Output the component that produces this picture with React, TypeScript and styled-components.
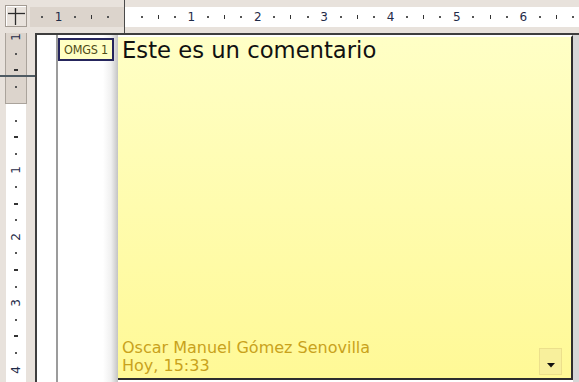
import React from 'react';
import styled, { createGlobalStyle } from 'styled-components';

const Q = 16.6;

const GlobalStyle = createGlobalStyle`
  html, body { margin: 0; padding: 0; background: #e8e2dc; overflow: hidden; }
  body { font-family: "DejaVu Sans", "Noto Sans", sans-serif; }
`;

const Frame = styled.div`
  width: 579px;
  height: 382px;
  display: flex;
  flex-direction: column;
  background: #e8e2dc;
  overflow: hidden;
`;

const TopBar = styled.div`
  height: 33px;
  display: flex;
  flex-shrink: 0;
`;

const Corner = styled.div`
  width: 30px;
  padding: 5px 0 0 5px;
  box-sizing: border-box;
  flex-shrink: 0;
`;

const CornerBox = styled.div`
  width: 22px;
  height: 22px;
  box-sizing: border-box;
  border: 1px solid #a39b93;
  box-shadow: inset 1px 1px 0 #fff;
  display: flex;
  align-items: center;
  justify-content: center;
`;

const HSegment = styled.div<{ $margin?: boolean }>`
  height: 20px;
  margin-top: 7px;
  display: flex;
  align-items: center;
  overflow: hidden;
  background: ${(p) => (p.$margin ? '#dcd4cc' : '#ffffff')};
  justify-content: ${(p) => (p.$margin ? 'flex-end' : 'flex-start')};
  width: ${(p) => (p.$margin ? '94px' : 'auto')};
  flex: ${(p) => (p.$margin ? '0 0 94px' : '1')};
`;

const HDivider = styled.div`
  width: 1px;
  flex-shrink: 0;
  background: #4a4a4a;
`;

const Spacer = styled.div<{ $w?: number; $h?: number }>`
  flex: 0 0 auto;
  width: ${(p) => (p.$w !== undefined ? `${p.$w}px` : 'auto')};
  height: ${(p) => (p.$h !== undefined ? `${p.$h}px` : 'auto')};
`;

const HCell = styled.div`
  flex: 0 0 ${Q}px;
  width: ${Q}px;
  height: 20px;
  display: flex;
  align-items: center;
  justify-content: center;
`;

const VCell = styled.div`
  flex: 0 0 ${Q}px;
  height: ${Q}px;
  width: 20px;
  display: flex;
  align-items: center;
  justify-content: center;
`;

const Dot = styled.div`
  width: 2px;
  height: 2px;
  background: #555;
`;

const HTick = styled.div`
  width: 1px;
  height: 4px;
  background: #333;
`;

const VTick = styled.div`
  width: 4px;
  height: 2px;
  background: #333;
`;

const Digit = styled.span<{ $vertical?: boolean }>`
  font-family: "DejaVu Sans", sans-serif;
  font-size: 12px;
  line-height: 12px;
  color: #1f2b48;
  display: inline-block;
  transform: ${(p) => (p.$vertical ? 'rotate(-90deg)' : 'none')};
`;

const Body = styled.div`
  flex: 1;
  display: flex;
  min-height: 0;
`;

const LeftRuler = styled.div`
  width: 35px;
  flex-shrink: 0;
  position: relative;
  display: flex;
  padding-left: 5px;
  box-sizing: border-box;
`;

const VStrip = styled.div`
  width: 22px;
  display: flex;
  flex-direction: column;
`;

const VMarginBox = styled.div`
  height: 71px;
  flex-shrink: 0;
  box-sizing: border-box;
  border: 1px solid #aaa39b;
  border-top: none;
  background: #dcd4cc;
  display: flex;
  flex-direction: column;
  justify-content: flex-end;
  align-items: center;
  overflow: hidden;
`;

const VWhite = styled.div`
  flex: 1;
  background: #fff;
  margin: 0 1px;
  display: flex;
  flex-direction: column;
  align-items: center;
  overflow: hidden;
`;

const IndentLine = styled.div`
  position: absolute;
  left: 0;
  top: 42px;
  width: 35px;
  height: 2px;
  background: #4f5b63;
`;

const Doc = styled.div`
  flex: 1;
  display: flex;
  min-width: 0;
  border-top: 2px solid #3e3e3e;
  border-left: 2px solid #3e3e3e;
  background: #fff;
`;

const PageStrip = styled.div`
  width: 81px;
  flex-shrink: 0;
  display: flex;
  background: linear-gradient(to right, #ffffff 0, #ffffff 66px, #f0f0f0 74px, #c4c4c4 81px);
`;

const MarginLine = styled.div`
  width: 2px;
  flex-shrink: 0;
  background: #9c9c9c;
`;

const AnchorCol = styled.div`
  width: 56px;
  flex-shrink: 0;
  padding-top: 3px;
`;

const Anchor = styled.div`
  height: 23px;
  box-sizing: border-box;
  border: 2px solid #25255c;
  background: #ffffc4;
  display: flex;
  align-items: center;
  justify-content: center;
  font-family: "DejaVu Sans Condensed", "DejaVu Sans", sans-serif;
  font-size: 12.5px;
  letter-spacing: -0.2px;
  color: #4f4b16;
`;

const Panel = styled.div`
  flex: 1;
  display: flex;
  flex-direction: column;
  justify-content: space-between;
  margin-bottom: 2px;
  border-top: 2px solid #ffffff;
  border-right: 2px solid #2e2e2e;
  border-bottom: 2px solid #2e2e2e;
  background: linear-gradient(to bottom, #ffffc6, #fff996);
`;

const CommentText = styled.div`
  padding: 0 0 0 4px;
  font-family: "DejaVu Sans", sans-serif;
  font-size: 22.7px;
  line-height: 27px;
  color: #111;
`;

const Footer = styled.div`
  display: flex;
  align-items: flex-end;
  justify-content: space-between;
  padding: 0 9px 3px 4px;
`;

const Author = styled.div`
  font-family: "DejaVu Sans", sans-serif;
  font-size: 16px;
  line-height: 18px;
  color: #c9a21c;
`;

const DropButton = styled.div`
  width: 23px;
  height: 27px;
  box-sizing: border-box;
  border: 1px solid #ece08c;
  background: #f8f09c;
  display: flex;
  align-items: flex-end;
  justify-content: center;
  padding-bottom: 6px;
`;

const RightGutter = styled.div`
  width: 6px;
  flex-shrink: 0;
  background: #d6d6d6;
`;

type Mark = 'd' | 't' | string;

const sequence = (count: number, startUnit: number): Mark[] => {
  const out: Mark[] = [];
  let unit = startUnit;
  while (out.length < count) {
    out.push('d', 't', 'd', String(unit));
    unit += 1;
  }
  return out.slice(0, count);
};

const HMark: React.FC<{ m: Mark }> = ({ m }) => (
  <HCell>{m === 'd' ? <Dot /> : m === 't' ? <HTick /> : <Digit>{m}</Digit>}</HCell>
);

const VMark: React.FC<{ m: Mark }> = ({ m }) => (
  <VCell>{m === 'd' ? <Dot /> : m === 't' ? <VTick /> : <Digit $vertical>{m}</Digit>}</VCell>
);

export default function App() {
  const topMargin: Mark[] = ['d', '1', 'd', 't', 'd'];
  const topMain = sequence(27, 1);
  const leftMargin: Mark[] = ['1', 'd', 't', 'd'];
  const leftMain = sequence(16, 1);

  return (
    <Frame>
      <GlobalStyle />
      <TopBar>
        <Corner>
          <CornerBox>
            <svg width="20" height="20" viewBox="0 0 20 20">
              <line x1="9.5" y1="2" x2="9.5" y2="19" stroke="#2b2b2b" strokeWidth="1.3" />
              <line x1="2" y1="7.5" x2="19" y2="7.5" stroke="#2b2b2b" strokeWidth="1.3" />
            </svg>
          </CornerBox>
        </Corner>
        <HSegment $margin>
          {topMargin.map((m, i) => (
            <HMark key={i} m={m} />
          ))}
          <Spacer $w={7.3} />
        </HSegment>
        <HDivider />
        <HSegment>
          <Spacer $w={8.3} />
          {topMain.map((m, i) => (
            <HMark key={i} m={m} />
          ))}
        </HSegment>
      </TopBar>
      <Body>
        <LeftRuler>
          <VStrip>
            <VMarginBox>
              {leftMargin.map((m, i) => (
                <VMark key={i} m={m} />
              ))}
              <Spacer $h={8} />
            </VMarginBox>
            <VWhite>
              <Spacer $h={8.3} />
              {leftMain.map((m, i) => (
                <VMark key={i} m={m} />
              ))}
            </VWhite>
          </VStrip>
          <IndentLine />
        </LeftRuler>
        <Doc>
          <PageStrip>
            <Spacer $w={19} />
            <MarginLine />
            <AnchorCol>
              <Anchor>OMGS 1</Anchor>
            </AnchorCol>
          </PageStrip>
          <Panel>
            <CommentText>Este es un comentario</CommentText>
            <Footer>
              <Author>
                <div>Oscar Manuel Gómez Senovilla</div>
                <div>Hoy, 15:33</div>
              </Author>
              <DropButton>
                <svg width="8" height="5" viewBox="0 0 8 5">
                  <polygon points="0,0 8,0 4,4.5" fill="#111" />
                </svg>
              </DropButton>
            </Footer>
          </Panel>
          <RightGutter />
        </Doc>
      </Body>
    </Frame>
  );
}
